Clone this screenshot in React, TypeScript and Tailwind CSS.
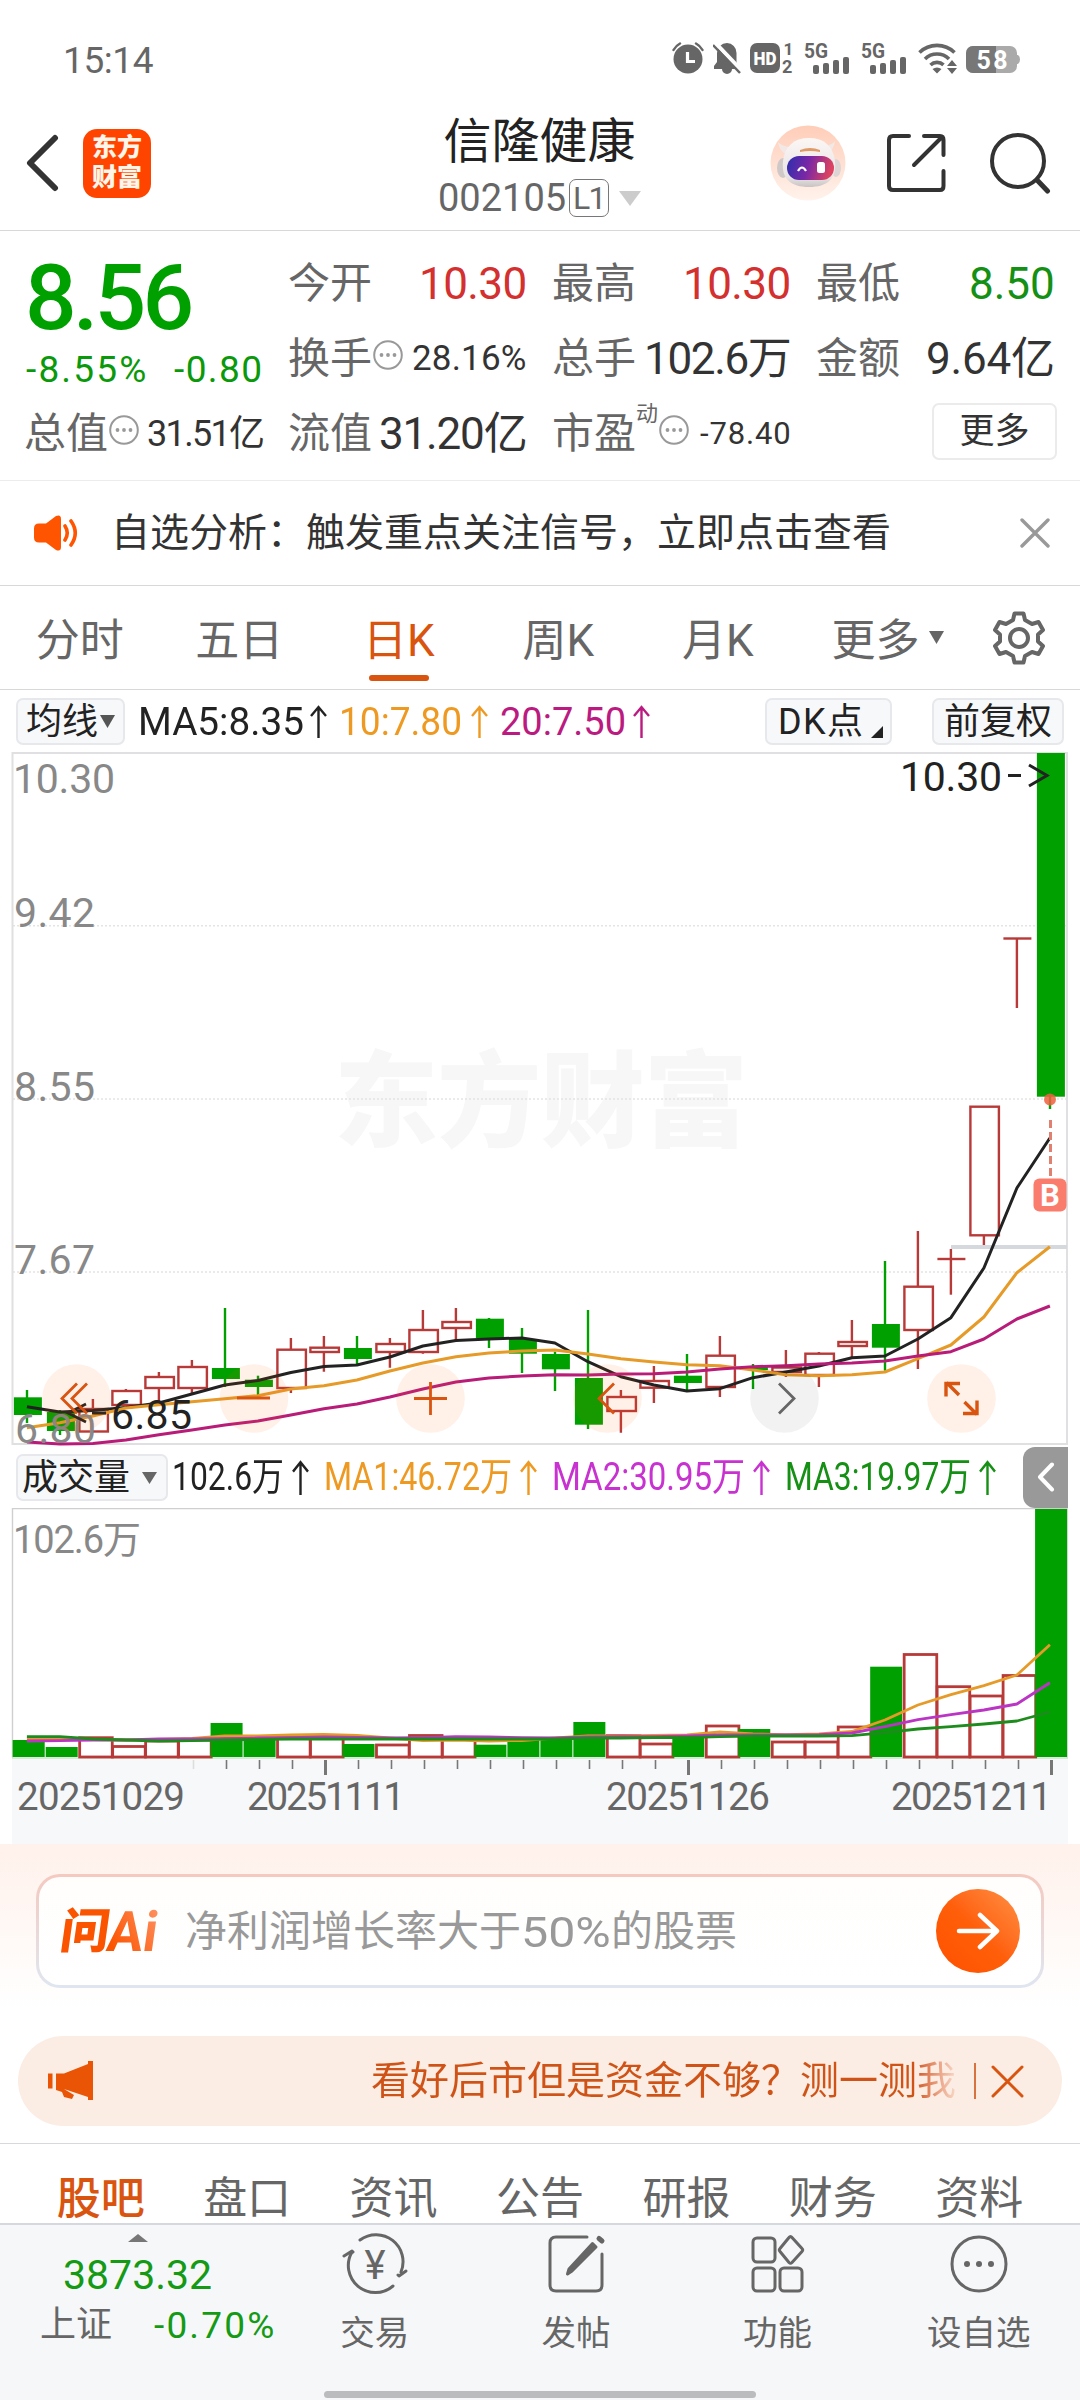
import { useLayoutEffect, useRef, useState, type ReactNode } from "react";

const FONT = 'font-[Roboto,"Noto_Sans_CJK_SC",sans-serif]';

/* Text set to an exact width, either by tracking or by condensing the glyphs. */
function Fit({ w, squeeze = false, className = "", children }: { w: number; squeeze?: boolean; className?: string; children: string }) {
  const ref = useRef<HTMLSpanElement>(null);
  const [natural, setNatural] = useState(0);
  useLayoutEffect(() => {
    if (ref.current) setNatural(ref.current.offsetWidth);
  }, []);
  const n = children.length;
  const style = !natural
    ? undefined
    : squeeze
      ? { transform: `scaleX(${w / natural})` }
      : { letterSpacing: `${(w - natural) / n}px` };
  return (
    <span className={`inline-flex shrink-0 whitespace-nowrap ${className}`} style={{ width: w }}>
      <span ref={ref} className="inline-block shrink-0 origin-left" style={style}>
        {children}
      </span>
    </span>
  );
}

function Signal() {
  return (
    <svg width="45" height="32" viewBox="0 0 45 32" className="shrink-0 overflow-visible">
      <text x="0" y="15.500" fontSize="20" fontWeight="700" textLength="24" lengthAdjust="spacingAndGlyphs" fill="#666" fontFamily="Roboto">5G</text>
      <g fill="#666">
        <rect x="9" y="23" width="6" height="9" rx="2" />
        <rect x="19" y="21" width="6" height="11" rx="2" />
        <rect x="29" y="18" width="6" height="14" rx="2" />
        <rect x="39" y="15" width="6" height="17" rx="2" />
      </g>
    </svg>
  );
}

function StatusBar() {
  return (
    <div className="flex h-[100px] items-center pt-4 pr-[60px] pl-[63px] text-[#666]">
      <Fit w={90} className="mt-1 text-[37px] leading-none">15:14</Fit>
      <div className="ml-auto flex items-center">
        <svg width="32" height="32" viewBox="0 0 32 32" className="mr-[9px]">
          <circle cx="16" cy="17" r="14.500" fill="#666" />
          <path d="M1.500 8A16 16 0 0 1 8 1.500M24 1.500A16 16 0 0 1 30.500 8" fill="none" stroke="#666" strokeWidth="2.500" strokeLinecap="round" />
          <path d="M15.500 10v9.500h7.500" fill="none" stroke="#fff" strokeWidth="3.200" />
        </svg>
        <svg width="28" height="32" viewBox="0 0 28 32" className="mr-[9px]">
          <path d="M14 1a10 10 0 0 0-10 10v9l-3 4v3h8a5 5 0 0 0 10 0h7l-1.500-3-1-4v-9A10 10 0 0 0 14 1z" fill="#666" />
          <path d="M2 .5 29 29" stroke="#fff" strokeWidth="4" />
          <path d="M0 3 27 31" stroke="#666" strokeWidth="2.500" />
        </svg>
        <svg width="43" height="32" viewBox="0 0 43 32" className="mr-[11px] overflow-visible">
          <rect x="0" y="1" width="30" height="30" rx="7" fill="#666" />
          <text x="3.500" y="22.500" fontSize="18" fontWeight="900" textLength="23" lengthAdjust="spacingAndGlyphs" fill="#fff" fontFamily="Roboto">HD</text>
          <text x="33.500" y="13" fontSize="17" fontWeight="700" fill="#666" fontFamily="Roboto">1</text>
          <text x="32" y="31" fontSize="18" fontWeight="700" fill="#666" fontFamily="Roboto">2</text>
        </svg>
        <Signal />
        <span className="w-3" />
        <Signal />
        <svg width="41" height="32" viewBox="0 0 41 32" className="mr-[7px] ml-3">
          <g fill="none" stroke="#666" strokeWidth="3.600">
            <path d="M1.500 10.500a25 25 0 0 1 35 0" />
            <path d="M7 17a17 17 0 0 1 24 0" />
            <path d="M12.500 23a9.500 9.500 0 0 1 13-.2" />
          </g>
          <path d="m14.500 27 4.500 4.500 4.500-4.500q-4.500-3-9 0zM29 24l5-6 5 6zM29 26l5 6 5-6z" fill="#666" />
        </svg>
        <svg width="54" height="32" viewBox="0 0 54 32">
          <rect x="0" y="4" width="51" height="27" rx="7" fill="#aaa" />
          <path d="M7 4h23v27H7a7 7 0 0 1-7-7V11a7 7 0 0 1 7-7z" fill="#777" />
          <path d="M51 13h1q2 1 2 4.500T52 22h-1z" fill="#aaa" />
          <text x="10.500" y="26.500" fontSize="25" fontWeight="700" textLength="31" fill="#fff" fontFamily="Roboto">58</text>
        </svg>
      </div>
    </div>
  );
}

function Robot() {
  return (
    <svg width="76" height="76" viewBox="0 0 76 76">
      <defs>
        <linearGradient id="robotBg" x1="0" y1="0" x2="0" y2="1">
          <stop offset="0" stopColor="#ffcdb8" />
          <stop offset="1" stopColor="#fff3ec" />
        </linearGradient>
        <linearGradient id="robotFace" x1="0" y1="0" x2="1" y2=".15">
          <stop offset="0" stopColor="#2c2fae" />
          <stop offset=".5" stopColor="#7a27a5" />
          <stop offset="1" stopColor="#dd4360" />
        </linearGradient>
        <linearGradient id="robotHead" x1="0" y1="0" x2="0" y2="1">
          <stop offset="0" stopColor="#fbf7f5" />
          <stop offset=".8" stopColor="#e9e4e4" />
          <stop offset="1" stopColor="#c9c3c4" />
        </linearGradient>
      </defs>
      <circle cx="38" cy="38" r="37.500" fill="url(#robotBg)" />
      <path d="M8 17q1 9 10 14l7-9Q13 23 8 17zM65 16q-1 9-9 14l-7-9q12 1 16-5z" fill="#f2e9e7" />
      <ellipse cx="13" cy="43" rx="6" ry="10" fill="#cfc8c8" />
      <ellipse cx="66" cy="43" rx="5" ry="9" fill="#ddd5d4" />
      <path d="M39 13c15 0 24 8 26 23 2 18-8 26-26 26S11 54 13 36c2-15 11-23 26-23z" fill="url(#robotHead)" />
      <path d="M30 25q10-4 20 0v2q-10-2-20 0z" fill="#e09a66" />
      <rect x="17" y="31" width="47" height="24" rx="12" fill="url(#robotFace)" />
      <path d="M28 46q4-7 8 0" fill="none" stroke="#fff" strokeWidth="2.200" />
      <rect x="47" y="37" width="8" height="11" rx="2.500" fill="#fff" />
    </svg>
  );
}

function NavBar() {
  return (
    <div className="grid h-[131px] grid-cols-[1fr_auto_1fr] border-b border-[#d8d8d8] pr-[29px] pl-[26px]">
      <div className="flex items-center pb-1">
        <svg width="33" height="58" viewBox="0 0 33 58">
          <path d="M29 4 4 29l25 25" fill="none" stroke="#333" strokeWidth="6" strokeLinecap="round" strokeLinejoin="round" />
        </svg>
        <div className="ml-[24px] flex h-[69px] w-[68px] flex-col items-center justify-center rounded-[14px] bg-[#ff4400] text-[25px] leading-[30px] font-black text-[#fff5e8]">
          <span>东方</span>
          <span>财富</span>
        </div>
      </div>
      <div className="flex flex-col items-center pt-[17px] pl-[2px]">
        <span className="text-[48px] leading-[50px] text-[#222]">信隆健康</span>
        <div className="mt-[9px] flex h-11 items-center">
          <Fit w={128} className="text-[38px] leading-none text-[#666]">002105</Fit>
          <span className="ml-[3px] flex h-[38px] w-[40px] items-center justify-center rounded-[7px] border border-[#777] text-[32px] leading-none tracking-tighter text-[#666]">L1</span>
          <svg width="22" height="15" className="ml-[10px]"><path d="M0 0h22L11 15z" fill="#ccc" /></svg>
        </div>
      </div>
      <div className="flex items-center justify-end pb-1">
        <Robot />
        <svg width="60" height="60" viewBox="0 0 60 60" fill="none" stroke="#333" strokeWidth="4" strokeLinecap="round" strokeLinejoin="round" className="ml-[40px]">
          <path d="M23 3H7Q3 3 3 7v46q0 4 4 4h47q3.500 0 3.500-4V38M38 3h16q3.500 0 3.500 4v15M28 32 56 4" />
        </svg>
        <svg width="62" height="62" viewBox="0 0 62 62" fill="none" stroke="#333" strokeWidth="4" strokeLinecap="round" className="ml-[43px]">
          <circle cx="29" cy="29" r="26" />
          <path d="m48 48 10.500 11" strokeWidth="5" />
        </svg>
      </div>
    </div>
  );
}

function More() {
  return (
    <svg width="30" height="30" viewBox="0 0 30 30" className="mb-[8px] ml-[1px] shrink-0">
      <circle cx="15" cy="15" r="13.800" fill="none" stroke="#999" strokeWidth="2" />
      <g fill="#999"><circle cx="8.500" cy="15" r="1.900" /><circle cx="15" cy="15" r="1.900" /><circle cx="21.500" cy="15" r="1.900" /></g>
    </svg>
  );
}

function Quote({ label, extra, children }: { label: string; extra?: ReactNode; children: ReactNode }) {
  return (
    <div className="flex items-center justify-between">
      <span className="flex items-center">
        <span className="-ml-px text-[42px] leading-none whitespace-nowrap text-[#666]">{label}</span>
        {extra}
      </span>
      {children}
    </div>
  );
}

function Quotes() {
  const big = "text-[44px] leading-none";
  return (
    <div className="grid h-[250px] grid-cols-[repeat(4,238px)] grid-rows-[repeat(3,75px)] gap-x-[26px] border-b border-[#ececec] pt-[15px] pl-[25px]">
      <div className="row-span-2 flex flex-col text-[#0a990a]">
        <Fit w={165} className="mt-[8px] text-[91px] leading-[88px] font-medium text-[#00a000]">8.56</Fit>
        <div className="mt-[8px] flex justify-between pl-px text-[37px] leading-[40px]">
          <Fit w={122}>-8.55%</Fit>
          <Fit w={89}>-0.80</Fit>
        </div>
      </div>
      <Quote label="今开"><Fit w={108} className={`${big} text-[#d3302f]`}>10.30</Fit></Quote>
      <Quote label="最高"><Fit w={108} className={`${big} text-[#d3302f]`}>10.30</Fit></Quote>
      <Quote label="最低"><Fit w={86} className={`${big} text-[#149014]`}>8.50</Fit></Quote>
      <Quote label="换手" extra={<More />}><Fit w={115} className="text-[35px] leading-none text-[#333]">28.16%</Fit></Quote>
      <Quote label="总手"><Fit w={147} className={`${big} text-[#333]`}>102.6万</Fit></Quote>
      <Quote label="金额"><Fit w={129} className={`${big} text-[#333]`}>9.64亿</Fit></Quote>
      <Quote label="总值" extra={<More />}><Fit w={116} className="text-[36px] leading-none text-[#333]">31.51亿</Fit></Quote>
      <Quote label="流值"><Fit w={148} className={`${big} text-[#333]`}>31.20亿</Fit></Quote>
      <Quote label="市盈" extra={<><span className="mb-[40px] text-[22px] leading-none text-[#666]">动</span><More /></>}>
        <Fit w={91} className="text-[31px] leading-none text-[#333]">-78.40</Fit>
      </Quote>
      <div className="-mr-[2px] flex items-center justify-end pb-[4px]">
        <span className="flex h-[57px] w-[125px] items-center justify-center rounded-[7px] border-2 border-[#ebebeb] text-[35px] leading-none text-[#333]">更多</span>
      </div>
    </div>
  );
}

function Notice() {
  return (
    <div className="flex h-[105px] items-center border-b border-[#d8d8d8] pr-[30px] pl-[34px]">
      <svg width="46" height="38" viewBox="0 0 46 38">
        <path d="M5 9.500h7L22 2q5-2 5 3v28q0 5-5 3l-10-7.500H5q-5 0-5-5V14.500q0-5 5-5z" fill="#ff5500" />
        <path d="M31 12q4.500 7 0 14M37 7q8.500 12 0 24" fill="none" stroke="#ff5500" strokeWidth="3.600" strokeLinecap="round" />
      </svg>
      <span className="mt-px ml-[31px] text-[39px] leading-none text-[#333]">自选分析：触发重点关注信号，立即点击查看</span>
      <svg width="30" height="30" viewBox="0 0 30 30" className="ml-auto"><path d="m2 2 26 26M28 2 2 28" stroke="#999" strokeWidth="3.400" strokeLinecap="round" /></svg>
    </div>
  );
}

function PeriodTabs() {
  const cell = "flex w-[159.500px] flex-col items-center text-[44px] leading-[60px]";
  return (
    <div className="flex h-[104px] items-start border-b border-[#d8d8d8] pt-[25px] text-[#666]">
      <span className={cell}>分时</span>
      <span className={cell}>五日</span>
      <span className={`${cell} text-[#d9540f]`}>
        日K
        <span className="mt-[4px] h-[6px] w-[60px] rounded-full bg-[#d9540f]" />
      </span>
      <span className={cell}>周K</span>
      <span className={cell}>月K</span>
      <span className="ml-[34px] text-[44px] leading-[60px]">更多</span>
      <svg width="15" height="13" className="mt-[20px] ml-[9px]"><path d="M0 0h15L7.500 13z" fill="#666" /></svg>
      <svg width="54" height="54" viewBox="0 0 54 54" className="ml-[48px]" fill="none" stroke="#666" strokeWidth="4" strokeLinejoin="round">
        <path d="M22.500 2.500h9l1.500 6.500 7 4 6.500-2 4.500 8-5 4.500v7l5 4.500-4.500 8-6.500-2-7 4-1.500 6.500h-9L21 45l-7-4-6.500 2L3 35l5-4.500v-7L3 19l4.500-8 6.500 2 7-4z" />
        <circle cx="27" cy="27" r="9" />
      </svg>
    </div>
  );
}

function Up({ h = 34 }: { h?: number }) {
  return (
    <svg width="17" height={h} viewBox="0 0 17 34" fill="none" stroke="currentColor" strokeWidth="2.400" preserveAspectRatio="none">
      <path d="M8.500 33V2M1 11l7.500-9L16 11" />
    </svg>
  );
}

const chip = "flex h-[47px] items-center rounded-[7px] border-2 border-[#e6e8ec] bg-[#f7f8fa] text-[36px] leading-none whitespace-nowrap text-[#222]";

function IndicatorBar() {
  return (
    <div className="flex h-[62px] items-center px-4 text-[38px] leading-none">
      <span className={`${chip} w-[109px] pt-px pl-[8px]`}>
        <Fit w={72}>均线</Fit>
        <svg width="15" height="13" className="ml-[2px]"><path d="M0 0h15L7.500 13z" fill="#555" /></svg>
      </span>
      <span className="ml-[13px] flex items-center pt-px text-[#222]"><Fit w={166} squeeze className="mr-[6px]">MA5:8.35</Fit><Up /></span>
      <span className="ml-[12px] flex items-center pt-px text-[#ee9a22]"><Fit w={123} squeeze className="mr-[9px]">10:7.80</Fit><Up /></span>
      <span className="ml-[12px] flex items-center pt-px text-[#bb1a80]"><Fit w={126} squeeze className="mr-[7px]">20:7.50</Fit><Up /></span>
      <span className={`${chip} ml-auto w-[127px] pt-px pl-[11px]`}>
        <Fit w={86}>DK点</Fit>
        <svg width="12" height="12" className="mt-[20px] ml-[7px]"><path d="M12 0v12H0z" fill="#222" /></svg>
      </span>
      <span className={`${chip} ml-[40px] w-[132px] justify-center pt-px`}>前复权</span>
    </div>
  );
}

type Candle = [up: 0 | 1, top: number, bottom: number, high: number, low: number];
const candles: Candle[] = [
  [0, 1397.3, 1415, 1390, 1423], [0, 1412, 1431, 1410, 1435], [1, 1409, 1431.5, 1399, 1431.5], [1, 1391, 1405, 1389, 1405],
  [1, 1377, 1388, 1372, 1401], [1, 1367, 1388, 1360, 1393], [0, 1368, 1379, 1308, 1387], [0, 1379.7, 1387, 1375.7, 1395],
  [1, 1349.7, 1388, 1338, 1393], [1, 1347.7, 1352, 1336, 1371.7], [0, 1348, 1359, 1336, 1365], [1, 1344, 1352, 1338, 1367.7],
  [1, 1330, 1352, 1310, 1353.7], [1, 1322, 1328, 1308, 1340], [0, 1318.7, 1338, 1318, 1348], [0, 1339, 1353.7, 1328, 1373],
  [0, 1354, 1369.3, 1351.7, 1391], [0, 1378, 1424.7, 1310, 1429], [1, 1397, 1411, 1390, 1432.7], [1, 1381, 1387.7, 1366, 1403],
  [0, 1375.7, 1383, 1354, 1391.7], [1, 1355.7, 1387, 1336, 1397], [0, 1367, 1370, 1364, 1389], [1, 1367.5, 1372, 1350, 1377],
  [1, 1353.7, 1375, 1352, 1387], [1, 1342, 1346, 1320, 1358], [0, 1324, 1347.7, 1261, 1370.7], [1, 1286.7, 1330, 1231, 1369],
  [1, 1259, 1259, 1249, 1294.7], [1, 1106.7, 1235.3, 1106.7, 1245], [1, 938.5, 938.5, 938.5, 1008], [0, 753, 1096.7, 753, 1109],
];
const ma5 = [1406.7, 1412, 1410.5, 1407.5, 1403, 1394, 1385, 1380.5, 1372.5, 1366.5, 1365, 1357, 1346, 1340.5, 1339, 1338, 1343, 1361.7, 1376.7, 1385, 1391, 1388.7, 1377.7, 1372, 1366, 1357.7, 1356, 1339, 1317.7, 1268, 1188, 1138];
const ma10 = [1427.7, 1422.7, 1416, 1408, 1404.7, 1401.7, 1398.7, 1395.7, 1389, 1385.7, 1380, 1371, 1363, 1356.7, 1353, 1351, 1350, 1354, 1358.7, 1362, 1364.7, 1365.7, 1370, 1374.7, 1375.7, 1374.7, 1372, 1358.7, 1345, 1317, 1272.7, 1246.7];
const ma20 = [1442, 1444, 1443.5, 1440, 1434.7, 1430, 1425, 1421, 1415, 1408.7, 1404, 1397, 1389, 1382, 1378, 1376, 1374.7, 1375, 1374, 1373.7, 1372, 1369, 1366.7, 1365.7, 1364, 1363, 1361, 1356, 1351.7, 1339, 1319, 1306];
const volTops = [1740, 1747, 1736.7, 1745.5, 1740, 1739, 1723, 1740, 1734.5, 1736, 1744, 1744, 1734.5, 1738.5, 1744.7, 1740, 1740, 1722, 1734.5, 1743, 1738, 1725, 1729, 1741, 1741, 1726, 1666.7, 1653.5, 1685.7, 1695, 1674.5, 1509];
const vma1 = [1739, 1739, 1739.5, 1740, 1739.5, 1738.5, 1736, 1736, 1735, 1734.5, 1735.5, 1738, 1740.5, 1740, 1741, 1740.5, 1738, 1736, 1736, 1735.5, 1735, 1732, 1734, 1734.7, 1734, 1731.5, 1720, 1705, 1694.7, 1685.7, 1675, 1644.7];
const vma2 = [1741, 1740.7, 1740, 1740, 1739, 1739, 1738.7, 1738, 1737.7, 1737, 1737.3, 1738, 1737.7, 1736.7, 1737, 1737.7, 1738, 1737, 1736.7, 1736.7, 1736, 1735, 1735, 1735, 1734.7, 1733, 1726.7, 1719.7, 1714.7, 1710, 1704, 1682.7];
const vma3 = [1736.7, 1736.7, 1739, 1740, 1741, 1740.7, 1740, 1739.3, 1739, 1739, 1739, 1739, 1739, 1739, 1739, 1739, 1739, 1738, 1738, 1737.7, 1737.5, 1736.7, 1736, 1736, 1736, 1735.7, 1732.7, 1729, 1726.7, 1724, 1721, 1712];

const cx = (i: number) => 26.9 + 33 * i;
const line = (ys: number[]) => ys.map((y, i) => `${cx(i)},${y}`).join(" ");

function Label({ x, y, w, size = 41, fill = "#888", children }: { x: number; y: number; w: number; size?: number; fill?: string; children: string }) {
  return (
    <text x={x} y={y + size * 0.3555} fontSize={size} textLength={w} fill={fill} fontFamily='Roboto, "Noto Sans CJK SC", sans-serif'>
      {children}
    </text>
  );
}

function PriceChart() {
  return (
    <svg width="1080" height="694" viewBox="0 752 1080 694" className="block">
      <text x="334" y="1139" fontSize="104" fontWeight="900" textLength="414" fill="#f7f7f7" fontFamily='"Noto Sans CJK SC", sans-serif'>东方财富</text>
      <g stroke="#e4e4e4" strokeWidth="1.500" strokeDasharray="2 2">
        <path d="M13 925.700H1066M13 1099H1066M13 1272H1066" />
      </g>
      <path d="M12.500 753H1067V1444H12.500z" fill="none" stroke="#e0e0e2" strokeWidth="2" />
      <rect x="951" y="1245" width="116" height="4" fill="#d5d8dc" />
      {candles.map(([up, t, b, h, l], i) => {
        const x = cx(i);
        return up ? (
          <g key={i} stroke="#b83a38" strokeWidth="2.400" fill="none">
            {t === b ? <path d={`M${x - 13.5} ${t}h28`} /> : <rect x={x - 13.5} y={t} width="28.500" height={b - t} />}
            <path d={t === b ? `M${x} ${h}V${l}` : `M${x} ${h}V${t}M${x} ${b}V${l}`} />
          </g>
        ) : (
          <g key={i} fill="#00a000">
            <rect x={x - 13} y={t} width="28" height={b - t} />
            <rect x={x - 1.1} y={h} width="2.400" height={l - h} />
          </g>
        );
      })}
      <g fill="none" strokeWidth="3" strokeLinejoin="round">
        <polyline points={line(ma5)} stroke="#222" />
        <polyline points={line(ma10)} stroke="#e69a28" />
        <polyline points={line(ma20)} stroke="#b81c78" />
      </g>
      <circle cx="1050" cy="1099.500" r="6" fill="#f0603f" fillOpacity=".85" />
      <path d="M1050.500 1120v57" stroke="#e08070" strokeWidth="3" strokeDasharray="8 4" />
      <rect x="1033.500" y="1178.500" width="33" height="33" rx="6" fill="#fa7c6c" />
      <text x="1050" y="1205.500" fontSize="31" fontWeight="700" textAnchor="middle" fill="#fff" fontFamily="Roboto, sans-serif">B</text>
      <Label x={13} y={778} w={102}>10.30</Label>
      <Label x={14} y={912.5} w={81}>9.42</Label>
      <Label x={14} y={1086} w={81}>8.55</Label>
      <Label x={14} y={1259} w={81}>7.67</Label>
      <Label x={15} y={1428} w={81}>6.80</Label>
      <Label x={900} y={776} w={102} fill="#222">10.30</Label>
      <path d="M1008 775.500h13M1029 765l18 10.500-18 10.500" fill="none" stroke="#222" strokeWidth="3" />
      <Label x={111} y={1414} w={81} fill="#222">6.85</Label>
      <path d="M92 1413h14M86 1404l-18 9 18 9" fill="none" stroke="#222" strokeWidth="2.800" />
      <g fill="#ff5a00" fillOpacity=".09">
        <circle cx="76.500" cy="1398.500" r="34.300" />
        <circle cx="254" cy="1398.500" r="34.300" />
        <circle cx="430.500" cy="1398.500" r="34.300" />
        <circle cx="607.500" cy="1398.500" r="34.300" />
        <circle cx="961.500" cy="1398.500" r="34.300" />
      </g>
      <circle cx="784.500" cy="1398.500" r="34.300" fill="#000" fillOpacity=".05" />
      <g fill="none" stroke="#d9540f" strokeWidth="2.800">
        <path d="M77 1383.500l-15 15 15 15M87 1383.500l-15 15 15 15" />
        <path d="M237 1398h33M414 1398.500h33M430.500 1382v33" />
        <path d="M614 1383.500l-15 15 15 15" />
        <path d="M959 1395l-12.500-12.500M960 1383.500h-14v13M964.500 1402l12.500 12.500M963 1413.500h14v-13" strokeWidth="3.400" />
      </g>
      <path d="M779 1383.500l15 15-15 15" fill="none" stroke="#666" strokeWidth="2.800" />
    </svg>
  );
}

function VolumeBar() {
  return (
    <div className="flex h-[62px] items-center pl-4 text-[39px] leading-none">
      <span className={`${chip} w-[152px] pt-px pl-[4px]`}>
        成交量
        <svg width="15" height="12" className="ml-[12px]"><path d="M0 0h15L7.500 12z" fill="#666" /></svg>
      </span>
      <span className="ml-[4px] flex items-center pt-px text-[#222]"><Fit w={112} squeeze className="mr-[8px]">102.6万</Fit><Up h={36} /></span>
      <span className="ml-[15px] flex items-center pt-px text-[#ee9a22]"><Fit w={188} squeeze className="mr-[8px]">MA1:46.72万</Fit><Up h={36} /></span>
      <span className="ml-[15px] flex items-center pt-px text-[#c832d0]"><Fit w={193} squeeze className="mr-[8px]">MA2:30.95万</Fit><Up h={36} /></span>
      <span className="ml-[15px] flex items-center pt-px text-[#159015]"><Fit w={186} squeeze className="mr-[8px]">MA3:19.97万</Fit><Up h={36} /></span>
      <span className="mr-[12px] ml-auto flex h-[61px] w-[45px] items-center justify-center rounded-l-xl bg-[#999]">
        <svg width="18" height="30" viewBox="0 0 18 30"><path d="M15 2.500 3 15l12 12.500" fill="none" stroke="#fff" strokeWidth="4" strokeLinecap="round" strokeLinejoin="round" /></svg>
      </span>
    </div>
  );
}

function VolumeChart() {
  return (
    <svg width="1080" height="336" viewBox="0 1508 1080 336" className="block">
      <rect x="12" y="1758" width="1056" height="86" fill="#f7f8fa" />
      <path d="M12.500 1757.500V1508.500H1067V1757.500" fill="none" stroke="#cfcfcf" strokeWidth="1.400" />
      <path d="M12 1758H1068" stroke="#b9d9b9" strokeWidth="1.200" />
      {volTops.map((t, i) => {
        const x = 12.7 + 32.98 * i;
        return candles[i][0] ? (
          <rect key={i} x={x + 1} y={t + 1} width="32.600" height={1756 - t} fill="#fff" stroke="#b83a38" strokeWidth="2.800" />
        ) : (
          <rect key={i} x={x} y={t} width="32" height={1757 - t} fill="#00a000" />
        );
      })}
      <g fill="none" strokeWidth="2.800" strokeLinejoin="round">
        <polyline points={line(vma1)} stroke="#e69a28" />
        <polyline points={line(vma2)} stroke="#bb35c4" />
        <polyline points={line(vma3)} stroke="#1d8c1d" />
      </g>
      <Label x={13} y={1539} w={128} size={38}>102.6万</Label>
      {Array.from({ length: 27 }, (_, k) => {
        const i = k + 5;
        const major = i === 9 || i === 20 || i === 31;
        return <path key={i} d={`M${28.5 + 33 * i} 1760v${major ? 15 : 9}`} stroke={i === 5 ? "#ddd" : "#777"} strokeWidth={major ? 3 : 1.6} />;
      })}
      <Label x={17} y={1796.5} w={168} size={38.5} fill="#666">20251029</Label>
      <Label x={247} y={1796.5} w={158} size={38.5} fill="#666">20251111</Label>
      <Label x={606} y={1796.5} w={164} size={38.5} fill="#666">20251126</Label>
      <Label x={891} y={1796.5} w={161} size={38.5} fill="#666">20251211</Label>
    </svg>
  );
}

function AskAi() {
  return (
    <div className="h-[192px] bg-linear-to-b from-[#fff1eb] to-white to-[85%] px-9 pt-[30px]">
      <div className="h-[114px] rounded-[24px] bg-linear-to-b from-[#f4c9bf] to-[#dfe6f1] p-[3px]">
        <div className="flex h-full items-center rounded-[21px] bg-linear-to-b from-[#fffefd] to-white pr-[21px] pl-[20px]">
          <svg width="100" height="50" viewBox="0 0 100 50" className="overflow-visible">
            <defs>
              <linearGradient id="aiFade" x1="0" y1="1" x2="1" y2="0">
                <stop offset=".2" stopColor="#fb5400" />
                <stop offset="1" stopColor="#ff9a70" />
              </linearGradient>
            </defs>
            <g transform="translate(7.500 0) skewX(-8)">
              <text x="-2" y="42" fontSize="48" fontWeight="900" textLength="49" lengthAdjust="spacingAndGlyphs" fill="#fb5400" fontFamily='"Noto Sans CJK SC", sans-serif'>问</text>
              <text x="45" y="44.500" fontSize="56" fontWeight="700" textLength="50" lengthAdjust="spacingAndGlyphs" fill="url(#aiFade)" fontFamily="Roboto, sans-serif">Ai</text>
            </g>
          </svg>
          <span className="mt-[3px] ml-[26px] flex text-[42px] leading-none text-[#999]">
            净利润增长率大于<Fit w={90} squeeze className="text-[43px]">50%</Fit>的股票
          </span>
          <span className="ml-auto flex size-[84px] items-center justify-center rounded-full bg-linear-to-bl from-[#ff9040] via-[#ff5f0a] via-50% to-[#ff5000]">
            <svg width="44" height="40" viewBox="0 0 44 40" fill="none" stroke="#fff" strokeWidth="4.500" strokeLinecap="round" strokeLinejoin="round"><path d="M3 20h38M24 4l17 16-17 16" /></svg>
          </span>
        </div>
      </div>
    </div>
  );
}

function Promo() {
  return (
    <div className="mx-[18px] flex h-[90px] items-center rounded-full bg-[#fcede4] pr-[38px] pl-[30px]">
      <svg width="46" height="40" viewBox="0 0 46 40" fill="#e95504"><path d="M0 12.500h4.500v15H0zM8 12.500h8L40 3V0h5v39h-5v-3l-24-8 10 6-2 4-8-2-2-5-6-2z" /></svg>
      <div className="ml-auto flex bg-linear-to-r from-[#cf5316] from-[93%] to-[#f8d8c8] bg-clip-text text-[39px] leading-[50px] text-transparent">看好后市但是资金不够？测一测我</div>
      <span className="ml-[18px] h-[36px] w-[2px] bg-[#d8723f]" />
      <svg width="33" height="33" viewBox="0 0 33 33" className="ml-[15px]"><path d="m2 2 29 29M31 2 2 31" stroke="#d9540f" strokeWidth="3" strokeLinecap="round" /></svg>
    </div>
  );
}

const sections = ["股吧", "盘口", "资讯", "公告", "研报", "财务", "资料"];

function SectionTabs() {
  return (
    <div className="mt-[17px] grid h-[80px] grid-cols-7 border-t border-[#d8d8dc] px-[27.500px] pt-[25px] text-center text-[44px] leading-[60px] text-[#666]">
      {sections.map((s, i) => (
        <span key={s} className={i === 0 ? "font-medium text-[#d9540f]" : ""}>{s}</span>
      ))}
    </div>
  );
}

function BottomBar() {
  const item = "flex w-[201.400px] flex-col items-center text-[34.500px] leading-[40px]";
  const icon = { width: 66, height: 62, viewBox: "0 0 66 62", fill: "none", stroke: "#666", strokeWidth: 3, strokeLinecap: "round" as const, strokeLinejoin: "round" as const };
  return (
    <div className="flex h-[178px] flex-col border-t-2 border-[#d5d8de] bg-[#f6f7f9]">
      <div className="flex h-[162px] text-[#666]">
        <div className="flex w-[275px] flex-col items-center">
          <svg width="20" height="8" className="mt-[9px]"><path d="M10 0l10 8H0z" fill="#777" /></svg>
          <Fit w={149} className="mt-[10px] text-[41px] leading-[46px] text-[#149a14]">3873.32</Fit>
          <div className="mt-[4px] flex h-[46px] w-full items-center pl-[40px]">
            <Fit w={72} className="text-[36px] leading-none">上证</Fit>
            <Fit w={122} className="ml-[42px] text-[37px] leading-none text-[#149a14]">-0.70%</Fit>
          </div>
        </div>
        <div className="-ml-px flex pt-[8px]">
          <span className={item}>
            <svg {...icon}>
              <path d="M18 7a27 27 0 0 1 41 32M51 53A27 27 0 0 1 10 19" />
              <path d="M2 23l8-5 1 1M64 38l-7 5-1-1" />
              <text x="33" y="46" fontSize="40" textAnchor="middle" fill="#666" stroke="none" fontFamily="Roboto, sans-serif">¥</text>
            </svg>
            <span className="mt-[18px]">交易</span>
          </span>
          <span className={item}>
            <svg {...icon}>
              <path d="M44 4H13q-6 0-6 6v42q0 6 6 6h40q6 0 6-6V21" />
              <path d="M26 36l-1.500 5 4.500-3L53 14l-3.500-3.500z" fill="#666" />
              <path d="M56 5.500 59 8" strokeWidth="5" />
            </svg>
            <span className="mt-[18px]">发帖</span>
          </span>
          <span className={item}>
            <svg {...icon}>
              <rect x="9" y="5" width="22" height="24" rx="4" />
              <path d="M45 4.500q1.500-2 3 0l10 11q1.500 1.500 0 3l-10 11q-1.500 1.500-3 0l-9-11q-1.500-1.500 0-3z" />
              <rect x="9" y="35" width="22" height="23" rx="4" />
              <rect x="36" y="35" width="22" height="23" rx="4" />
            </svg>
            <span className="mt-[18px]">功能</span>
          </span>
          <span className={item}>
            <svg {...icon}>
              <circle cx="33" cy="31" r="27" />
              <g fill="#666" stroke="none"><circle cx="21" cy="31" r="3" /><circle cx="33" cy="31" r="3" /><circle cx="45" cy="31" r="3" /></g>
            </svg>
            <span className="mt-[18px]">设自选</span>
          </span>
        </div>
      </div>
      <span className="mt-[4px] h-[7px] w-[432px] self-center rounded-full bg-[#bbbcbe]" />
    </div>
  );
}

export default function App() {
  return (
    <div className={`h-[2400px] w-[1080px] overflow-hidden bg-white ${FONT}`}>
      <StatusBar />
      <NavBar />
      <Quotes />
      <Notice />
      <PeriodTabs />
      <IndicatorBar />
      <PriceChart />
      <VolumeBar />
      <VolumeChart />
      <AskAi />
      <Promo />
      <SectionTabs />
      <BottomBar />
    </div>
  );
}
